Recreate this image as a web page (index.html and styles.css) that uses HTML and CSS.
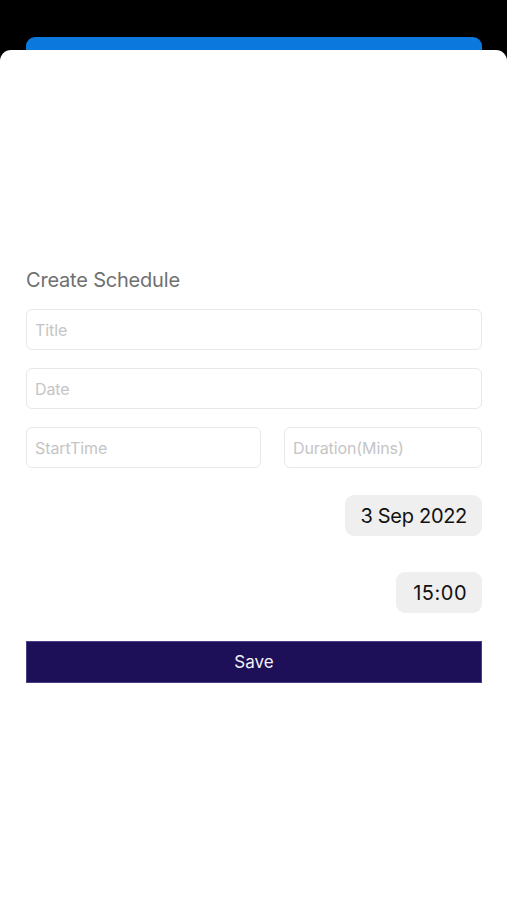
FILE: index.html
```html
<!DOCTYPE html>
<html lang="en">
<head>
<meta charset="utf-8">
<title>Create Schedule</title>
<link rel="stylesheet" href="styles.css">
</head>
<body>
<div class="screen">
  <div class="behind-bar"></div>
  <main class="sheet">
    <h1 class="heading">Create Schedule</h1>
    <div class="field"><span class="placeholder">Title</span></div>
    <div class="field"><span class="placeholder">Date</span></div>
    <div class="row">
      <div class="field start"><span class="placeholder">StartTime</span></div>
      <div class="field duration"><span class="placeholder">Duration(Mins)</span></div>
    </div>
    <div class="pill date-pill">3 Sep 2022</div>
    <div class="pill time-pill">15:00</div>
    <button class="save">Save</button>
  </main>
</div>
</body>
</html>
```

FILE: styles.css
```css
html, body {
  margin: 0;
  padding: 0;
  background: #000;
  height: 100%;
}
body {
  font-family: Inter, "Liberation Sans", Roboto, sans-serif;
}
.screen {
  display: flex;
  flex-direction: column;
  min-height: 100%;
  padding-top: 37px;
  box-sizing: border-box;
}
.behind-bar {
  height: 13px;
  margin: 0 25px 0 26px;
  background: #0a78dc;
  border-radius: 9px 9px 0 0;
}
.sheet {
  flex: 1;
  background: #fff;
  border-radius: 11px 11px 0 0;
  padding: 218px 25px 0 26px;
  display: flex;
  flex-direction: column;
}
.heading {
  margin: 0 0 17px 0;
  font-size: 20px;
  line-height: 24px;
  font-weight: 400;
  color: #707070;
  letter-spacing: -0.2px;
}
.field {
  height: 41px;
  box-sizing: border-box;
  border: 1px solid #e8e8e8;
  border-radius: 6px;
  display: flex;
  align-items: center;
  padding-left: 8px;
  margin-bottom: 18px;
}
.placeholder {
  font-size: 16px;
  color: #c5c5c5;
  letter-spacing: -0.1px;
}
.row {
  display: flex;
  gap: 23px;
  margin-bottom: 9px;
}
.row .field {
  margin-bottom: 0;
}
.start {
  width: 235px;
}
.duration {
  flex: 1;
}
.pill {
  align-self: flex-end;
  height: 41px;
  box-sizing: border-box;
  background: #efefef;
  border-radius: 9px;
  display: flex;
  align-items: center;
  font-size: 20px;
  color: #111;
  padding: 0 15px;
}
.date-pill {
  margin-top: 18px;
  letter-spacing: -0.3px;
}
.time-pill {
  margin-top: 36px;
  padding: 0 15px 0 17px;
  letter-spacing: 0.5px;
}
.save {
  margin-top: 28px;
  height: 42px;
  border: 1px solid #4a3f86;
  background: #1e1058;
  color: #f2f2f2;
  font-family: inherit;
  font-size: 17px;
  padding: 0;
  cursor: pointer;
}
```
